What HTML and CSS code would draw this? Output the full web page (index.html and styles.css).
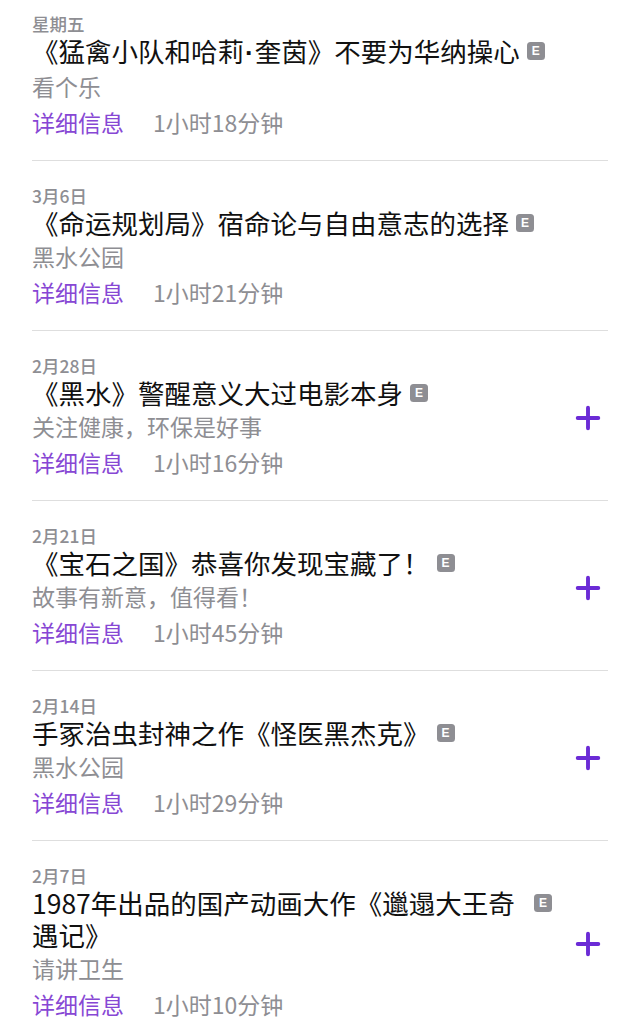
FILE: index.html
```html
<!DOCTYPE html>
<html lang="zh-CN">
<head>
<meta charset="utf-8">
<title>单集列表</title>
<link rel="stylesheet" href="styles.css">
</head>
<body>
<ul class="list">
  <li class="row">
    <div class="info">
      <div class="date">星期五</div>
      <div class="title-row"><span class="title">《猛禽小队和哈莉<span class="dot">·</span>奎茵》不要为华纳操心</span><span class="badge">E</span></div>
      <div class="sub">看个乐</div>
      <div class="meta"><span class="more">详细信息</span><span class="dur">1小时18分钟</span></div>
    </div>
    <div class="action"></div>
  </li>
  <li class="row">
    <div class="info">
      <div class="date">3月6日</div>
      <div class="title-row"><span class="title">《命运规划局》宿命论与自由意志的选择</span><span class="badge">E</span></div>
      <div class="sub">黑水公园</div>
      <div class="meta"><span class="more">详细信息</span><span class="dur">1小时21分钟</span></div>
    </div>
    <div class="action"></div>
  </li>
  <li class="row">
    <div class="info">
      <div class="date">2月28日</div>
      <div class="title-row"><span class="title">《黑水》警醒意义大过电影本身</span><span class="badge">E</span></div>
      <div class="sub">关注健康，环保是好事</div>
      <div class="meta"><span class="more">详细信息</span><span class="dur">1小时16分钟</span></div>
    </div>
    <div class="action"><svg class="plus" viewBox="0 0 24 24"><path d="M12 2.5v19M2.5 12h19"/></svg></div>
  </li>
  <li class="row">
    <div class="info">
      <div class="date">2月21日</div>
      <div class="title-row"><span class="title">《宝石之国》恭喜你发现宝藏了！</span><span class="badge">E</span></div>
      <div class="sub">故事有新意，值得看！</div>
      <div class="meta"><span class="more">详细信息</span><span class="dur">1小时45分钟</span></div>
    </div>
    <div class="action"><svg class="plus" viewBox="0 0 24 24"><path d="M12 2.5v19M2.5 12h19"/></svg></div>
  </li>
  <li class="row">
    <div class="info">
      <div class="date">2月14日</div>
      <div class="title-row"><span class="title">手冢治虫封神之作《怪医黑杰克》</span><span class="badge">E</span></div>
      <div class="sub">黑水公园</div>
      <div class="meta"><span class="more">详细信息</span><span class="dur">1小时29分钟</span></div>
    </div>
    <div class="action"><svg class="plus" viewBox="0 0 24 24"><path d="M12 2.5v19M2.5 12h19"/></svg></div>
  </li>
  <li class="row">
    <div class="info">
      <div class="date">2月7日</div>
      <div class="title-row"><span class="title">1987年出品的国产动画大作《邋遢大王奇遇记》</span><span class="badge">E</span></div>
      <div class="sub">请讲卫生</div>
      <div class="meta"><span class="more">详细信息</span><span class="dur">1小时10分钟</span></div>
    </div>
    <div class="action"><svg class="plus" viewBox="0 0 24 24"><path d="M12 2.5v19M2.5 12h19"/></svg></div>
  </li>
</ul>
</body>
</html>
```
FILE: styles.css
```css
html, body {
  margin: 0;
  padding: 0;
  background: #fff;
}
body {
  font-family: "Noto Sans CJK SC", "Noto Sans", sans-serif;
  overflow: hidden;
}
.list {
  list-style: none;
  margin: -11px 32px 0;
  padding: 0;
}
.row {
  display: flex;
  align-items: center;
  padding: 24px 0 19px;
  border-bottom: 1px solid #dedede;
}
.info {
  flex: 1;
  min-width: 0;
}
.date {
  font-size: 17.5px;
  line-height: 22px;
  font-weight: 500;
  color: #8e8e93;
}
.title-row {
  display: flex;
  align-items: flex-start;
  gap: 7px;
  max-width: 520px;
}
.title {
  font-size: 26.5px;
  line-height: 32px;
  color: #111;
}
.dot {
  font-family: "Liberation Sans", Arial, sans-serif;
  font-weight: 700;
  padding: 0 1px;
}
.badge {
  flex: none;
  width: 18px;
  height: 18px;
  margin-top: 7px;
  border-radius: 3.5px;
  background: #8e8e93;
  color: #fff;
  font-family: "Liberation Sans", Arial, sans-serif;
  font-weight: 700;
  font-size: 12px;
  line-height: 18px;
  text-align: center;
}
.sub {
  font-size: 23px;
  line-height: 34px;
  color: #8e8e93;
}
.meta {
  display: flex;
  gap: 29px;
  font-size: 23px;
  line-height: 38px;
}
.more {
  color: #8747d4;
}
.dur {
  color: #8e8e93;
}
.action {
  flex: none;
  width: 44px;
  display: flex;
  justify-content: flex-end;
}
.plus {
  width: 26px;
  height: 26px;
  margin-right: 7px;
  fill: none;
  stroke: #6b2bd6;
  stroke-width: 3.6;
  stroke-linecap: round;
}
```
